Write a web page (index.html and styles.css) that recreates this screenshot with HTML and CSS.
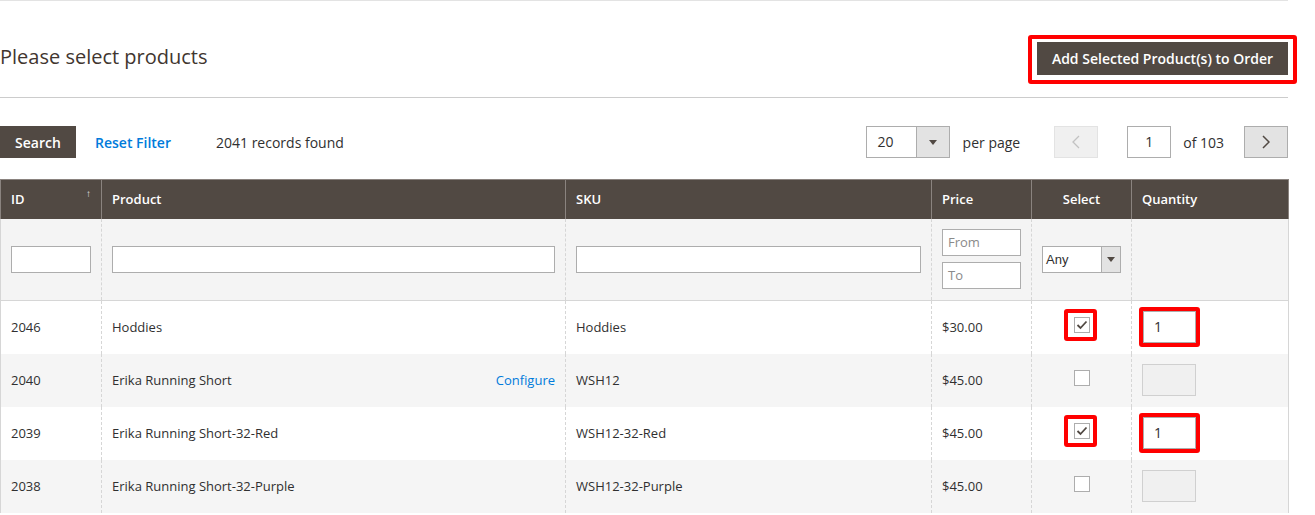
FILE: index.html
```html
<!DOCTYPE html>
<html>
<head>
<meta charset="utf-8">
<link rel="stylesheet" href="styles.css">
</head>
<body>
<div class="page">
  <div class="section-head">
    <h2 class="title">Please select products</h2>
    <span class="mark mark-btn"><button class="btn-primary">Add Selected Product(s) to Order</button></span>
  </div>

  <div class="toolbar">
    <div class="tb-left">
      <button class="btn-search">Search</button>
      <a class="link-reset">Reset Filter</a>
      <span class="records">2041 records found</span>
    </div>
    <div class="tb-right">
      <div class="limiter">
        <span class="limiter-val">20</span>
        <span class="limiter-arrow"><svg width="8" height="5" viewBox="0 0 8 5"><path d="M0 0h8L4 5z" fill="#514943"/></svg></span>
      </div>
      <span class="per-page">per page</span>
      <span class="pager-btn prev"><svg width="8" height="14" viewBox="0 0 8 14"><path d="M7 1L1 7l6 6" fill="none" stroke="#c2c2c2" stroke-width="1.3"/></svg></span>
      <span class="page-input">1</span>
      <span class="of-pages">of 103</span>
      <span class="pager-btn next"><svg width="8" height="14" viewBox="0 0 8 14"><path d="M1 1l6 6-6 6" fill="none" stroke="#514943" stroke-width="1.5"/></svg></span>
    </div>
  </div>

  <table class="grid">
    <colgroup>
      <col class="c-id"><col class="c-product"><col class="c-sku"><col class="c-price"><col class="c-select"><col class="c-qty">
    </colgroup>
    <thead>
      <tr class="head-row">
        <th class="th-id">ID<span class="sort">&#8593;</span></th>
        <th>Product</th>
        <th>SKU</th>
        <th>Price</th>
        <th class="center">Select</th>
        <th>Quantity</th>
      </tr>
      <tr class="filter-row">
        <td><span class="input"></span></td>
        <td><span class="input"></span></td>
        <td><span class="input"></span></td>
        <td class="price-filter">
          <span class="input ph">From</span>
          <span class="input ph">To</span>
        </td>
        <td>
          <span class="select"><span class="select-val">Any</span><span class="select-arrow"><svg width="8" height="5" viewBox="0 0 8 5"><path d="M0 0h8L4 5z" fill="#514943"/></svg></span></span>
        </td>
        <td></td>
      </tr>
    </thead>
    <tbody>
      <tr>
        <td>2046</td>
        <td>Hoddies</td>
        <td>Hoddies</td>
        <td>$30.00</td>
        <td class="center"><span class="mark mark-cb"><span class="cb checked"><svg width="12" height="10" viewBox="0 0 12 10"><path d="M1.5 5l3 3 6-6.5" fill="none" stroke="#514943" stroke-width="1.8"/></svg></span></span></td>
        <td><span class="mark mark-qty"><span class="qty">1</span></span></td>
      </tr>
      <tr class="alt">
        <td>2040</td>
        <td><div class="prod"><span>Erika Running Short</span><a class="configure">Configure</a></div></td>
        <td>WSH12</td>
        <td>$45.00</td>
        <td class="center"><span class="cb"></span></td>
        <td><span class="qty disabled"></span></td>
      </tr>
      <tr>
        <td>2039</td>
        <td>Erika Running Short-32-Red</td>
        <td>WSH12-32-Red</td>
        <td>$45.00</td>
        <td class="center"><span class="mark mark-cb"><span class="cb checked"><svg width="12" height="10" viewBox="0 0 12 10"><path d="M1.5 5l3 3 6-6.5" fill="none" stroke="#514943" stroke-width="1.8"/></svg></span></span></td>
        <td><span class="mark mark-qty"><span class="qty">1</span></span></td>
      </tr>
      <tr class="alt">
        <td>2038</td>
        <td>Erika Running Short-32-Purple</td>
        <td>WSH12-32-Purple</td>
        <td>$45.00</td>
        <td class="center"><span class="cb"></span></td>
        <td><span class="qty disabled"></span></td>
      </tr>
    </tbody>
  </table>
</div>
</body>
</html>
```
FILE: styles.css
```css
* { box-sizing: border-box; }
html, body { margin: 0; padding: 0; background: #fff; }
body {
  font-family: "Open Sans", "Noto Sans", sans-serif;
  color: #303030;
  font-size: 14px;
  overflow: hidden;
}
.page {
  width: 1288px;
  border-top: 1px solid #e3e3e3;
}
.section-head {
  display: flex;
  justify-content: space-between;
  align-items: center;
  padding-top: 34px;
  padding-bottom: 13px;
  border-bottom: 1px solid #cccccc;
}
.title {
  margin: -5px 0 0 0;
  font-size: 20px;
  font-weight: 400;
  color: #41362f;
  line-height: 28px;
}
.mark {
  display: inline-block;
  border: 4px solid #ff0000;
  border-radius: 3px;
}
.mark-btn {
  padding: 3px 5px 5px 5px;
  margin-right: -9px;
}
.btn-primary {
  display: block;
  width: 251px;
  height: 33px;
  border: 0;
  background: #514943;
  color: #fff;
  font-family: "Open Sans", sans-serif;
  font-size: 14px;
  font-weight: 600;
  padding: 0;
}
.toolbar {
  display: flex;
  justify-content: space-between;
  align-items: center;
  margin-top: 28px;
  height: 32px;
}
.tb-left, .tb-right {
  display: flex;
  align-items: center;
  height: 32px;
}
.btn-search {
  width: 76px;
  height: 32px;
  border: 0;
  background: #514943;
  color: #fff;
  font-family: "Open Sans", sans-serif;
  font-size: 14px;
  font-weight: 600;
  padding: 0;
}
.link-reset {
  margin-left: 19px;
  color: #007bdb;
  font-weight: 600;
}
.records {
  margin-left: 45px;
  color: #303030;
}
.limiter {
  display: flex;
  width: 84px;
  height: 32px;
  border: 1px solid #adadad;
}
.limiter-val {
  flex: 1;
  padding-left: 11px;
  line-height: 30px;
}
.limiter-arrow {
  width: 33px;
  background: #e3e3e3;
  border-left: 1px solid #adadad;
  display: flex;
  align-items: center;
  justify-content: center;
}
.per-page { margin-left: 13px; margin-right: 34px; }
.pager-btn {
  width: 44px;
  height: 32px;
  display: flex;
  align-items: center;
  justify-content: center;
}
.pager-btn.prev {
  background: #f0f0f0;
  border: 1px solid #e3e3e3;
}
.pager-btn.next {
  background: #e3e3e3;
  border: 1px solid #adadad;
}
.page-input {
  margin-left: 29px;
  width: 44px;
  height: 32px;
  border: 1px solid #adadad;
  text-align: center;
  line-height: 30px;
}
.of-pages { margin-left: 12px; margin-right: 20px; }

.grid {
  margin-top: 21px;
  width: 1288px;
  border-collapse: collapse;
  table-layout: fixed;
  font-size: 13px;
}
.c-id { width: 101px; }
.c-product { width: 464px; }
.c-sku { width: 366px; }
.c-price { width: 100px; }
.c-select { width: 100px; }
.c-qty { width: 157px; }
.grid th {
  background: #514943;
  color: #fff;
  font-weight: 600;
  text-align: left;
  height: 39px;
  padding: 0 10px 1px 10px;
  border-left: 1px solid #8a837f;
  border-right: 1px solid #8a837f;
  border-top: 1px solid #8a837f;
}
.grid th.center, .grid td.center { text-align: center; }
.grid td.center { line-height: 0; padding-bottom: 5px; }
.th-id { position: relative; }
.sort {
  position: absolute;
  right: 10px;
  top: 6px;
  font-size: 10px;
  font-weight: 400;
  color: #e3e3e3;
}
.grid td {
  padding: 0 10px;
  border-left: 1px dashed #d6d6d6;
  border-right: 1px dashed #d6d6d6;
  height: 53px;
  vertical-align: middle;
}
.grid td:first-child { border-left: 1px solid #d6d6d6; }
.grid td:last-child { border-right: 1px solid #d6d6d6; }
.filter-row td {
  background: #f4f4f4;
  height: 82px;
  border-bottom: 1px solid #d6d6d6;
}
.input {
  display: block;
  height: 27px;
  width: 100%;
  background: #fff;
  border: 1px solid #adadad;
}
.price-filter .input + .input { margin-top: 6px; }
.input.ph {
  color: #8a8a8a;
  font-size: 13px;
  line-height: 25px;
  padding-left: 5px;
}
.select {
  display: flex;
  height: 27px;
  width: 79px;
  background: #fff;
  border: 1px solid #adadad;
}
.select-val {
  flex: 1;
  font-family: "Liberation Sans", Arial, sans-serif;
  font-size: 13px;
  line-height: 25px;
  padding-left: 3px;
  color: #303030;
}
.select-arrow {
  width: 19px;
  background: #e3e3e3;
  border-left: 1px solid #adadad;
  display: flex;
  align-items: center;
  justify-content: center;
}
tbody tr.alt td { background: #f5f5f5; }
.prod {
  display: flex;
  justify-content: space-between;
}
.configure { color: #007bdb; }
.cb {
  display: inline-flex;
  width: 16px;
  height: 16px;
  border: 1px solid #adadad;
  background: #fff;
  align-items: center;
  justify-content: center;
  vertical-align: middle;
}
.mark-cb {
  display: inline-flex;
  vertical-align: middle;
  padding: 4px 3px 4px 6px;
  margin-left: -2px;
}
.qty {
  display: block;
  width: 54px;
  height: 32px;
  border: 1px solid #adadad;
  background: #fff;
  padding-left: 11px;
  line-height: 30px;
  font-size: 14px;
}
.qty.disabled {
  background: #f0f0f0;
  border-color: #d0d0d0;
}
.mark-qty {
  padding: 0;
  margin-left: -3px;
}
.mark-qty .qty {
  width: 53px;
  padding-left: 10px;
}
```
